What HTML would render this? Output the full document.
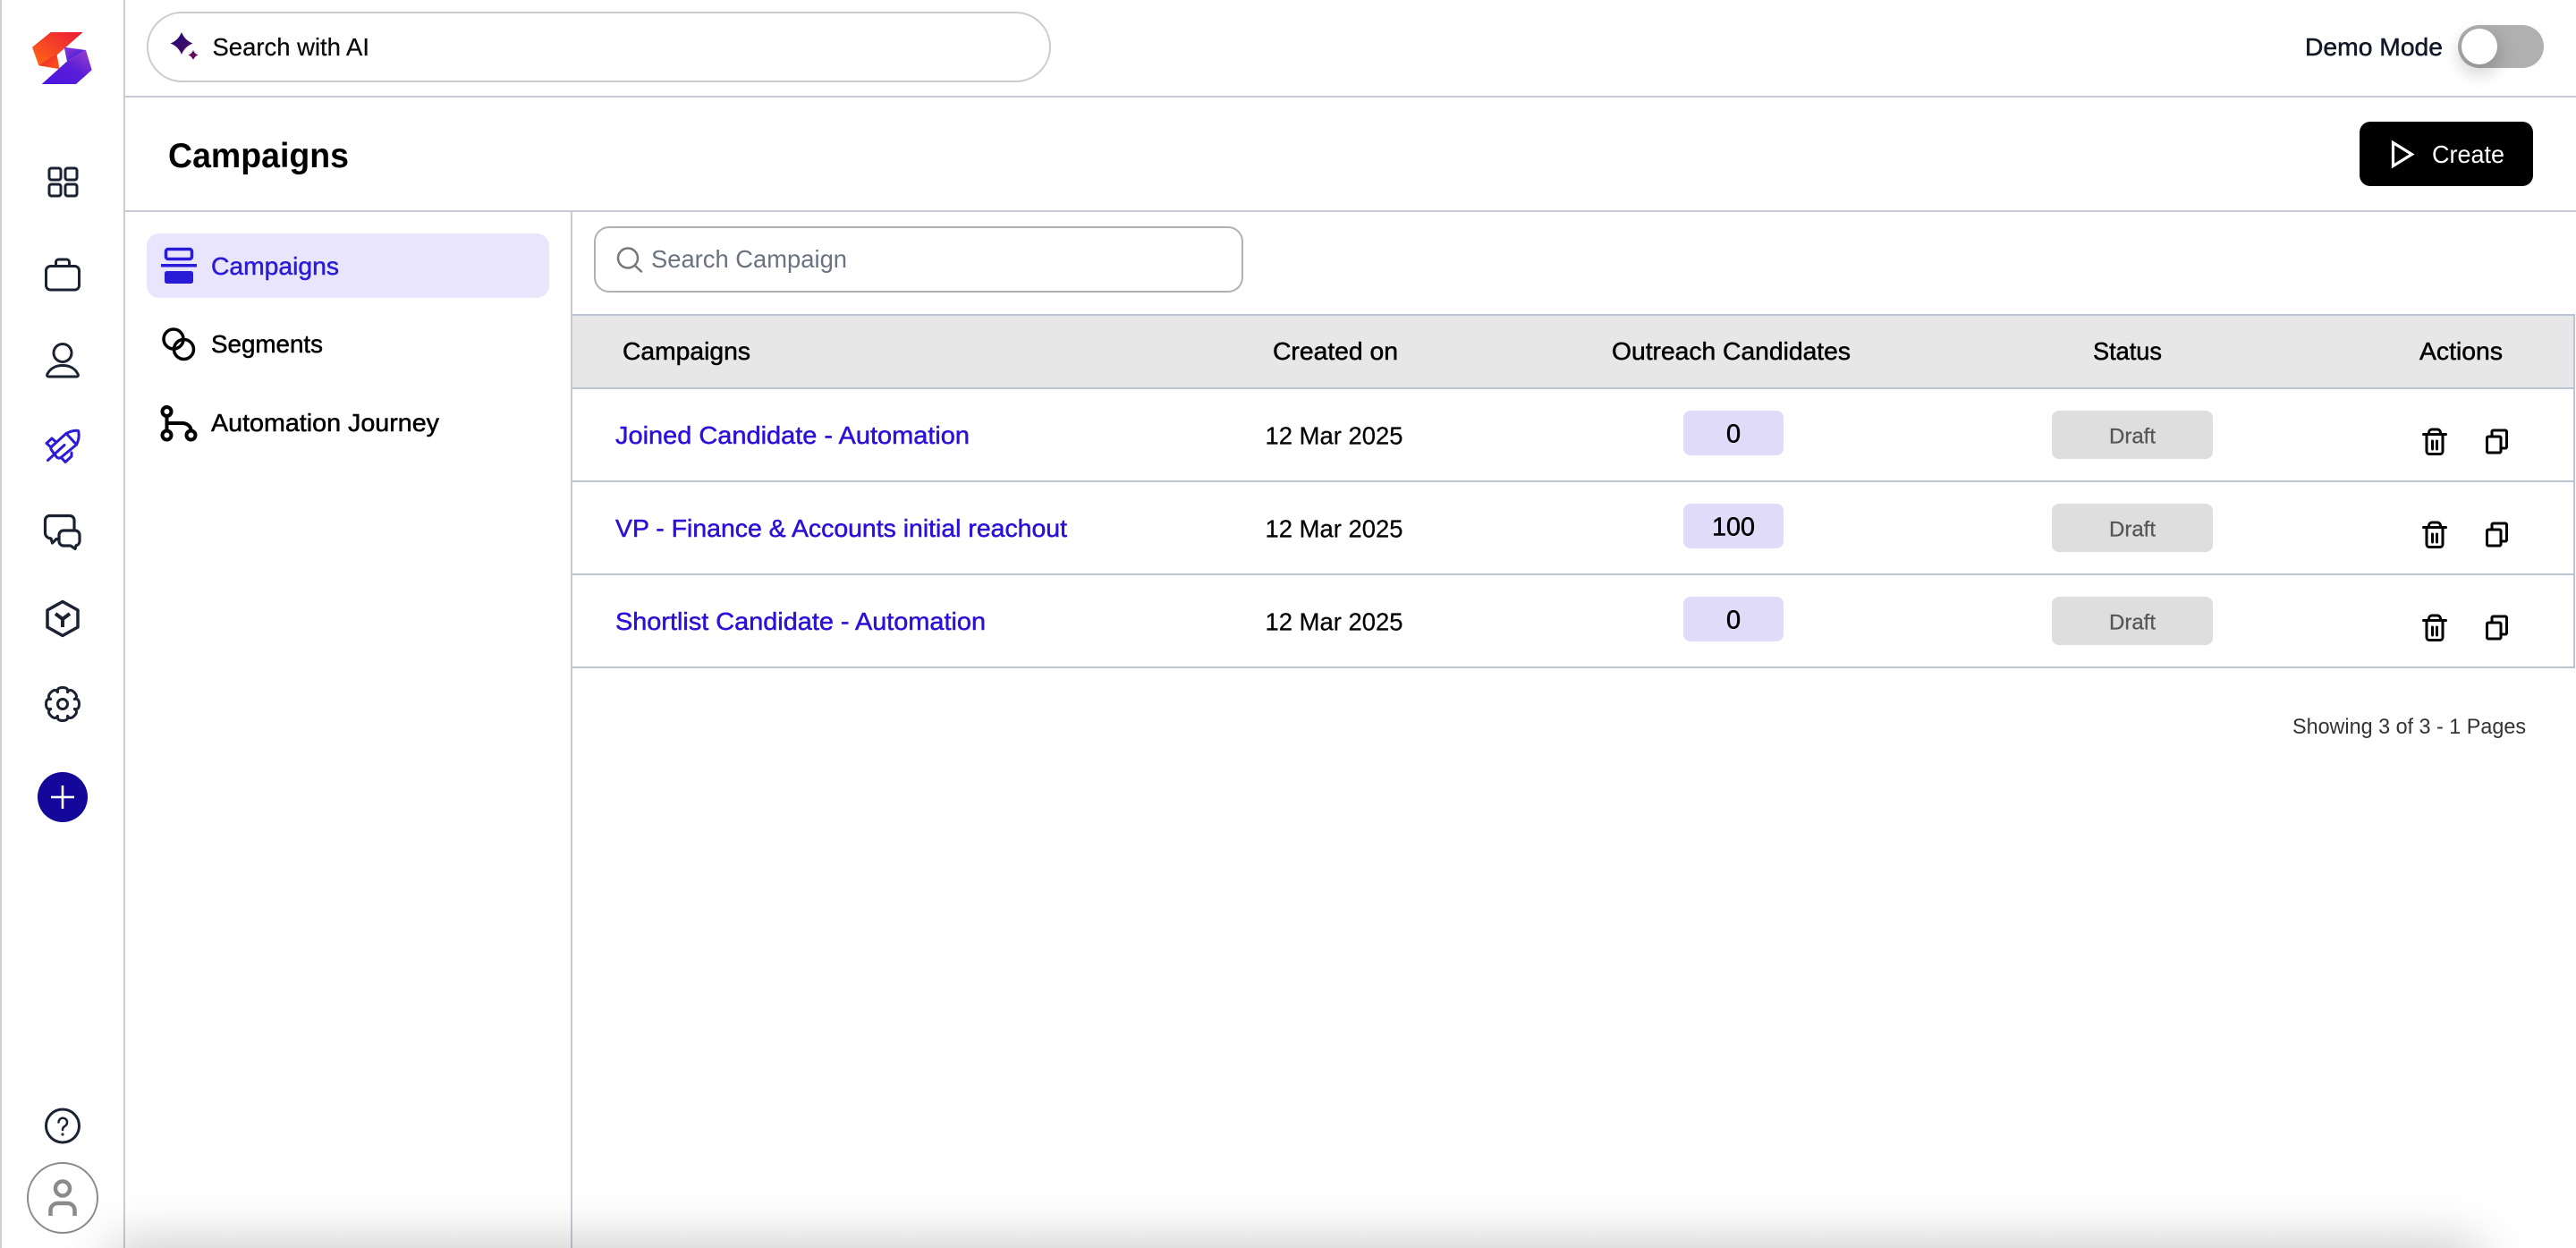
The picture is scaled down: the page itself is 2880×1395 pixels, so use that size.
<!DOCTYPE html>
<html lang="en">
<head>
<meta charset="utf-8">
<title>Campaigns</title>
<style>
html,body{margin:0;padding:0;width:2880px;height:1395px;overflow:hidden;background:#fff}
#wrap{position:relative;width:2880px;height:1395px;overflow:hidden;contain:paint}
svg{display:block;position:absolute;left:0;top:0}
text{font-family:"Liberation Sans",sans-serif;font-size:28px}
.m{stroke-width:.5px}
.l{stroke-width:.25px}
#sh{position:absolute;left:125px;width:2645px;top:1396px;height:40px;box-shadow:0 0 60px rgba(0,0,0,.3)}
#knobsh{position:absolute;left:2752px;top:32px;width:40px;height:40px;border-radius:50%;box-shadow:0 8px 20px 2px rgba(0,0,0,.2)}
#knob{position:absolute;left:2752px;top:32px;width:40px;height:40px;border-radius:50%;background:#fff}
</style>
</head>
<body>
<div id="wrap">
<svg width="2880" height="1395" viewBox="0 0 2880 1395" xmlns="http://www.w3.org/2000/svg">
<defs>
<linearGradient id="lgO" x1="0" y1="1" x2="1" y2="0"><stop offset="0" stop-color="#ff6a13"/><stop offset="1" stop-color="#ea1a3a"/></linearGradient>
<linearGradient id="lgR" x1="0" y1="0" x2="1" y2="1"><stop offset="0" stop-color="#e81f2d"/><stop offset="1" stop-color="#ff5a1a"/></linearGradient>
<linearGradient id="lgP" x1="0" y1="1" x2="1" y2="0"><stop offset="0" stop-color="#4a14e0"/><stop offset=".55" stop-color="#5b1fd8"/><stop offset="1" stop-color="#a040c8"/></linearGradient>
<linearGradient id="lgQ" x1="0" y1="0" x2="1" y2="1"><stop offset="0" stop-color="#8a3cd8"/><stop offset="1" stop-color="#3a12d8"/></linearGradient>
<linearGradient id="lgS" x1="0" y1="0" x2="1" y2="1"><stop offset="0" stop-color="#160a78"/><stop offset="1" stop-color="#5a0a60"/></linearGradient>
</defs>

<!-- frame lines -->
<rect x="0" y="0" width="2" height="1395" fill="#cfcfd2"/>
<rect x="138" y="0" width="2" height="1395" fill="#cccdd4"/>
<rect x="140" y="107" width="2740" height="2" fill="#c8cad8"/>
<rect x="140" y="235" width="2740" height="2" fill="#c8cad8"/>
<rect x="638" y="237" width="2" height="1158" fill="#c8cad8"/>

<!-- logo -->
<path d="M92.700 36H56.700L36 52.700 43.300 73.300 63.300 61.700Z" fill="url(#lgO)"/>
<path d="M43.300 73.300 63.300 60 66.700 77.300Z" fill="url(#lgR)"/>
<path d="M71.700 52.700 96 56 75 68.500Z" fill="url(#lgQ)"/>
<path d="M96 56 102.700 78.300 85 94H46.700L75 68.500Z" fill="url(#lgP)"/>

<!-- sidebar icons -->
<g fill="none" stroke="#1b2333" stroke-width="3" stroke-linecap="round" stroke-linejoin="round">
  <rect x="55" y="188" width="13" height="13" rx="2.500"/>
  <rect x="73" y="188" width="13" height="13" rx="2.500"/>
  <rect x="55" y="206" width="13" height="13" rx="2.500"/>
  <rect x="73" y="206" width="13" height="13" rx="2.500"/>
  <rect x="51.500" y="297.500" width="37" height="26.500" rx="5"/>
  <path d="M62.500 297v-4a3 3 0 0 1 3-3h9a3 3 0 0 1 3 3v4"/>
  <circle cx="70" cy="394.500" r="10"/>
  <path d="M55 421h30c2 0 3-1 2-3-3-6-9-9.500-17-9.500s-14 3.500-17 9.500c-1 2 0 3 2 3z"/>
  <path d="M66 602.500H63l-4.500 4.500-1.500-5c-4-.5-6.500-3-6.500-6.500V581.500a5 5 0 0 1 5-5h22.500a5 5 0 0 1 5 5v11" stroke-width="3.200"/>
  <path d="M71 593h13a5 5 0 0 1 5 5v7a5 5 0 0 1-4 4.800l-1 3.700-5-3.500H71a5 5 0 0 1-5-5v-7a5 5 0 0 1 5-5z" stroke-width="3.200"/>
  <path d="M70 672.500l17 9.500v19l-17 9.500-17-9.500v-19z" stroke-width="3.500"/>
  <path d="M62 686l8 6 8-6M70 692v9" stroke-width="4" stroke-linecap="butt" stroke-linejoin="miter"/>
  <circle cx="70" cy="787" r="5.500"/>
  <g transform="translate(70 787)">
    <g id="t"><path d="M-5.550-13.400C-6.500-17-4-18.500 0-18.500S6.500-17 5.550-13.400"/></g>
    <use href="#t" transform="rotate(45)"/><use href="#t" transform="rotate(90)"/><use href="#t" transform="rotate(135)"/>
    <use href="#t" transform="rotate(180)"/><use href="#t" transform="rotate(225)"/><use href="#t" transform="rotate(270)"/><use href="#t" transform="rotate(315)"/>
  </g>
  <circle cx="70" cy="1258.500" r="18.500" stroke-width="3"/>
  <path d="M65.500 1254.500a4.800 4.800 0 1 1 7 4.300c-1.500 1-2.500 2-2.500 3.700v.5" stroke-width="2.500"/>
  <circle cx="70" cy="1268" r=".6" stroke-width="2"/>
</g>
<!-- rocket -->
<g fill="none" stroke="#2a1bd6" stroke-width="3" stroke-linecap="round" stroke-linejoin="round">
  <path d="M74 484.500Q82 480.500 87.500 481.500 89.500 489 85.500 497L68 511.500Q65 513 63 510.500L57.500 503Q56 501 58 499Z"/>
  <path d="M74 484.500 85.500 497"/>
  <path d="M53.500 514.500 72 497.500"/>
  <path d="M62 493.500 58 490 52 495.500 57 500"/>
  <path d="M80 506 80 510 73 516.500 69 512"/>
</g>
<circle cx="70" cy="891" r="28" fill="#14089a"/>
<rect x="57" y="889.700" width="26" height="2.600" fill="#fff"/>
<rect x="68.700" y="878" width="2.600" height="26" fill="#fff"/>
<circle cx="70" cy="1339" r="39" fill="none" stroke="#8a8a8a" stroke-width="2"/>
<circle cx="70" cy="1328.500" r="8" fill="none" stroke="#8a8a8a" stroke-width="4.500"/>
<path d="M56.500 1359v-6a8 8 0 0 1 8-8h11a8 8 0 0 1 8 8v6" fill="none" stroke="#8a8a8a" stroke-width="4.500"/>

<!-- AI search -->
<rect x="165" y="14" width="1009" height="77" rx="38.500" fill="#fff" stroke="#cccccc" stroke-width="2"/>
<path d="M203 36Q206.500 45 215.500 48.500 206.500 52 203 61 199.500 52 190.500 48.500 199.500 45 203 36Z" fill="url(#lgS)"/>
<path d="M216 56Q217.500 60 221.500 61.500 217.500 63 216 67 214.500 63 210.500 61.500 214.500 60 216 56Z" fill="#650a5e"/>
<text x="237.500" y="62" textLength="175.500" lengthAdjust="spacingAndGlyphs" fill="#0a0a0a" stroke="#0a0a0a" class="l">Search with AI</text>

<!-- demo mode -->
<text class="m" x="2577" y="62" textLength="154" lengthAdjust="spacingAndGlyphs" fill="#111827" stroke="#111827">Demo Mode</text>
<rect x="2748" y="28" width="96" height="48" rx="24" fill="#b0b0b0"/>

<!-- page header -->
<text x="188" y="187" style="font-size:39px" font-weight="700" textLength="202" lengthAdjust="spacingAndGlyphs" fill="#000">Campaigns</text>
<rect x="2638" y="136" width="194" height="72" rx="12" fill="#000"/>
<path d="M2675.500 159.500v26l21-13z" fill="none" stroke="#fff" stroke-width="3.200" stroke-linejoin="miter"/>
<text x="2719" y="182" textLength="81" lengthAdjust="spacingAndGlyphs" fill="#fff">Create</text>

<!-- secondary nav -->
<rect x="164" y="261" width="450" height="72" rx="14" fill="#e9e5fd"/>
<rect x="185.500" y="278.500" width="29" height="11" rx="2.500" fill="none" stroke="#2a1bd6" stroke-width="3.500"/>
<rect x="180" y="295" width="40" height="3.500" fill="#2a1bd6"/>
<rect x="184" y="303" width="32" height="14" rx="2.500" fill="#2a1bd6"/>
<text class="m" x="236" y="307" textLength="143" lengthAdjust="spacingAndGlyphs" fill="#2a1bd6" stroke="#2a1bd6">Campaigns</text>
<g fill="none" stroke="#000" stroke-width="3.500">
  <circle cx="194" cy="379" r="11"/>
  <circle cx="205.500" cy="390.500" r="11"/>
</g>
<g fill="none" stroke="#000" stroke-width="4">
  <circle cx="186.500" cy="460" r="5"/>
  <circle cx="186.500" cy="486.500" r="5"/>
  <circle cx="213.500" cy="486.500" r="5"/>
  <path d="M186.500 465v16.500M186.500 473h17a10 8 0 0 1 10 8.500"/>
</g>
<text class="m" x="236" y="394" textLength="125" lengthAdjust="spacingAndGlyphs" fill="#000" stroke="#000">Segments</text>
<text class="m" x="236" y="482" textLength="255" lengthAdjust="spacingAndGlyphs" fill="#000" stroke="#000">Automation Journey</text>

<!-- search campaign -->
<rect x="665" y="254" width="724" height="72" rx="16" fill="#fff" stroke="#b0b0b0" stroke-width="2"/>
<circle cx="702" cy="288.500" r="11" fill="none" stroke="#777" stroke-width="2.500"/>
<path d="M710 297l7 6.500" fill="none" stroke="#777" stroke-width="2.500" stroke-linecap="round"/>
<text x="728" y="299" textLength="219" lengthAdjust="spacingAndGlyphs" fill="#6b7280">Search Campaign</text>

<!-- table -->
<rect x="640" y="352" width="2239" height="82" fill="#e7e7e7"/>
<rect x="640" y="351" width="2239" height="2" fill="#b9c4d6"/>
<rect x="640" y="433" width="2239" height="2" fill="#b9c4d6"/>
<rect x="640" y="537" width="2239" height="2" fill="#b9c4d6"/>
<rect x="640" y="641" width="2239" height="2" fill="#b9c4d6"/>
<rect x="640" y="745" width="2239" height="2" fill="#b9c4d6"/>
<rect x="2877" y="351" width="2" height="396" fill="#b9c4d6"/>

<g fill="#000" stroke="#000">
  <text class="m" x="696" y="402" textLength="143" lengthAdjust="spacingAndGlyphs">Campaigns</text>
  <text class="m" x="1423" y="402" textLength="140" lengthAdjust="spacingAndGlyphs">Created on</text>
  <text class="m" x="1802" y="402" textLength="267" lengthAdjust="spacingAndGlyphs">Outreach Candidates</text>
  <text class="m" x="2340" y="402" textLength="77" lengthAdjust="spacingAndGlyphs">Status</text>
  <text class="m" x="2705" y="402" textLength="93" lengthAdjust="spacingAndGlyphs">Actions</text>
</g>

<g fill="#2a10d8" stroke="#2a10d8">
  <text class="m" x="688" y="496" textLength="396" lengthAdjust="spacingAndGlyphs">Joined Candidate - Automation</text>
  <text class="m" x="688" y="600" textLength="505" lengthAdjust="spacingAndGlyphs">VP - Finance &amp; Accounts initial reachout</text>
  <text class="m" x="688" y="704" textLength="414" lengthAdjust="spacingAndGlyphs">Shortlist Candidate - Automation</text>
</g>
<g fill="#000" stroke="#000">
  <text class="l" x="1414.500" y="496.500" textLength="154" lengthAdjust="spacingAndGlyphs">12 Mar 2025</text>
  <text class="l" x="1414.500" y="600.500" textLength="154" lengthAdjust="spacingAndGlyphs">12 Mar 2025</text>
  <text class="l" x="1414.500" y="704.500" textLength="154" lengthAdjust="spacingAndGlyphs">12 Mar 2025</text>
</g>

<g fill="#e0dbf8">
  <rect x="1882" y="459" width="112" height="50" rx="8"/>
  <rect x="1882" y="563" width="112" height="50" rx="8"/>
  <rect x="1882" y="667" width="112" height="50" rx="8"/>
</g>
<g fill="#000" stroke="#000">
  <text class="m" x="1930" y="494.500" style="font-size:29px">0</text>
  <text class="m" x="1914" y="598.500" style="font-size:29px" textLength="48" lengthAdjust="spacingAndGlyphs">100</text>
  <text class="m" x="1930" y="702.500" style="font-size:29px">0</text>
</g>
<g fill="#dedede">
  <rect x="2294" y="459" width="180" height="54" rx="8"/>
  <rect x="2294" y="563" width="180" height="54" rx="8"/>
  <rect x="2294" y="667" width="180" height="54" rx="8"/>
</g>
<g fill="#555" stroke="#555">
  <text class="l" x="2358" y="495.500" style="font-size:24px" textLength="52" lengthAdjust="spacingAndGlyphs">Draft</text>
  <text class="l" x="2358" y="599.500" style="font-size:24px" textLength="52" lengthAdjust="spacingAndGlyphs">Draft</text>
  <text class="l" x="2358" y="703.500" style="font-size:24px" textLength="52" lengthAdjust="spacingAndGlyphs">Draft</text>
</g>

<g id="act" fill="none" stroke="#000" stroke-width="3" stroke-linecap="round" stroke-linejoin="round">
  <path d="M2709.500 485.500h25"/>
  <path d="M2715.500 485v-1.500a3.500 3.500 0 0 1 3.500-3.500h6a3.500 3.500 0 0 1 3.500 3.500v1.500"/>
  <path d="M2713 486v18.500a3 3 0 0 0 3 3h12a3 3 0 0 0 3-3v-18.500"/>
  <path d="M2719.500 493v9M2724.500 493v9"/>
  <rect x="2780.500" y="488" width="15.500" height="18" rx="1.500"/>
  <path d="M2786 487v-4.500a1.500 1.500 0 0 1 1.500-1.500h13.500a1.500 1.500 0 0 1 1.500 1.500v17a1.500 1.500 0 0 1-1.500 1.500h-4"/>
</g>
<use href="#act" y="104"/>
<use href="#act" y="208"/>

<text x="2563" y="820" style="font-size:24px" textLength="261" lengthAdjust="spacingAndGlyphs" fill="#333">Showing 3 of 3 - 1 Pages</text>
</svg>
<div id="knobsh"></div>
<div id="knob"></div>
<div id="sh"></div>
</div>
</body>
</html>
